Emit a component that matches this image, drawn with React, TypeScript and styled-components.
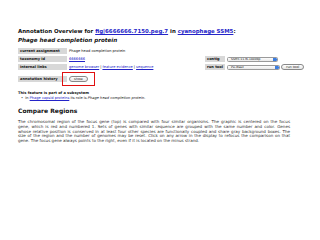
import React from "react";
import styled, { createGlobalStyle } from "styled-components";

const Global = createGlobalStyle`
  html, body { margin: 0; padding: 0; background: #fff; }
  body { font-family: "DejaVu Sans", Verdana, sans-serif; color: #111; }
`;

const Page = styled.div`
  width: 320px;
  height: 240px;
  box-sizing: border-box;
  padding: 27px 10px 0 18px;
  overflow: hidden;
`;

const Title = styled.h1`
  margin: 0;
  font-size: 5.45px;
  line-height: 9px;
  font-weight: bold;
`;

const Subtitle = styled.div`
  font-size: 5.6px;
  line-height: 9px;
  font-weight: bold;
  font-style: italic;
`;

const Link = styled.a`
  color: #2424c8;
  text-decoration: underline;
`;

const InfoArea = styled.div`
  display: flex;
  align-items: flex-start;
  margin-top: 3px;
`;

const Table = styled.div<{ $label: number; $width: number; $top?: number }>`
  display: grid;
  grid-template-columns: ${(p) => p.$label}px 1fr;
  column-gap: 2px;
  row-gap: 2px;
  width: ${(p) => p.$width}px;
  flex-shrink: 0;
  margin-top: ${(p) => p.$top ?? 0}px;
  align-items: center;
`;

const Label = styled.div`
  background: #d8d8d8;
  font-size: 3.6px;
  font-weight: bold;
  line-height: 6px;
  height: 6px;
  padding: 0 2px;
  display: flex;
  align-items: center;
  white-space: nowrap;
`;

const Value = styled.div`
  font-size: 3.6px;
  line-height: 6px;
  white-space: nowrap;
  display: flex;
  align-items: center;
  gap: 1px;
`;

const Highlight = styled.div`
  border: 1px solid #e01010;
  padding: 3px 6px 3px 6px;
  margin-left: -7px;
  display: inline-flex;
`;

const Button = styled.button`
  font-family: "DejaVu Sans", sans-serif;
  font-size: 3.4px;
  height: 6px;
  padding: 0 4px;
  border: 0.6px solid #888;
  border-radius: 3px;
  background: linear-gradient(#fff, #e6e6e6);
  color: #222;
  line-height: 4px;
  min-width: 17px;
`;

const Select = styled.div<{ $w: number }>`
  width: ${(p) => p.$w}px;
  height: 5px;
  border: 0.6px solid #9a9a9a;
  border-radius: 1.5px;
  background: linear-gradient(#fdfdfd, #e8e8e8);
  font-size: 3px;
  line-height: 5px;
  padding-left: 3px;
  box-sizing: border-box;
  display: flex;
  justify-content: space-between;
  align-items: center;
  overflow: hidden;
`;

const Arrow = styled.span`
  width: 4px;
  height: 100%;
  background: #3d7ee0;
  border-radius: 0 1px 1px 0;
`;

const Section = styled.div`
  margin-top: 5px;
  font-size: 3.6px;
  line-height: 5px;
`;

const Bold = styled.div`
  font-weight: bold;
`;

const Bullet = styled.div`
  display: flex;
  gap: 2px;
  padding-left: 3px;
  &::before { content: "•"; }
`;

const H2 = styled.h2`
  margin: 5px 0 4px;
  font-size: 6px;
  line-height: 10px;
  font-weight: bold;
`;

const Para = styled.div`
  font-size: 4.05px;
  line-height: 4.75px;
  width: 272px;
  color: #333;
`;

const ParaLine = styled.div<{ $last?: boolean }>`
  text-align: justify;
  text-align-last: ${(p) => (p.$last ? "left" : "justify")};
`;

const lines = [
  "The chromosomal region of the focus gene (top) is compared with four similar organisms. The graphic is centered on the focus",
  "gene, which is red and numbered 1. Sets of genes with similar sequence are grouped with the same number and color. Genes",
  "whose relative position is conserved in at least four other species are functionally coupled and share gray background boxes. The",
  "size of the region and the number of genomes may be reset. Click on any arrow in the display to refocus the comparison on that",
  "gene. The focus gene always points to the right, even if it is located on the minus strand.",
];

export default function App() {
  return (
    <>
      <Global />
      <Page>
        <Title>
          Annotation Overview for <Link>fig|6666666.7150.peg.7</Link> in <Link>cyanophage SSM5</Link>:
        </Title>
        <Subtitle>Phage head completion protein</Subtitle>
        <InfoArea>
          <Table $label={49} $width={187}>
            <Label>current assignment</Label>
            <Value>Phage head completion protein</Value>
            <Label>taxonomy id</Label>
            <Value><Link>6666666</Link></Value>
            <Label>internal links</Label>
            <Value>
              <Link>genome browser</Link> | <Link>feature evidence</Link> | <Link>sequence</Link>
            </Value>
            <Label>annotation history</Label>
            <Value>
              <Highlight><Button>show</Button></Highlight>
            </Value>
          </Table>
          <Table $label={20} $width={100} $top={8}>
            <Label>contig</Label>
            <Value>
              <Select $w={51}>SSM5:1176-1840bp<Arrow /></Select>
            </Value>
            <Label>run tool</Label>
            <Value>
              <Select $w={53}>Psi-Blast<Arrow /></Select>
              <Button>run tool</Button>
            </Value>
          </Table>
        </InfoArea>
        <Section>
          <Bold>This feature is part of a subsystem</Bold>
          <Bullet>
            <span>
              In <Link>Phage capsid proteins</Link> its role is <i>Phage head completion protein</i>.
            </span>
          </Bullet>
        </Section>
        <H2>Compare Regions</H2>
        <Para>
          {lines.map((l, i) => (
            <ParaLine key={i} $last={i === lines.length - 1}>{l}</ParaLine>
          ))}
        </Para>
      </Page>
    </>
  );
}
